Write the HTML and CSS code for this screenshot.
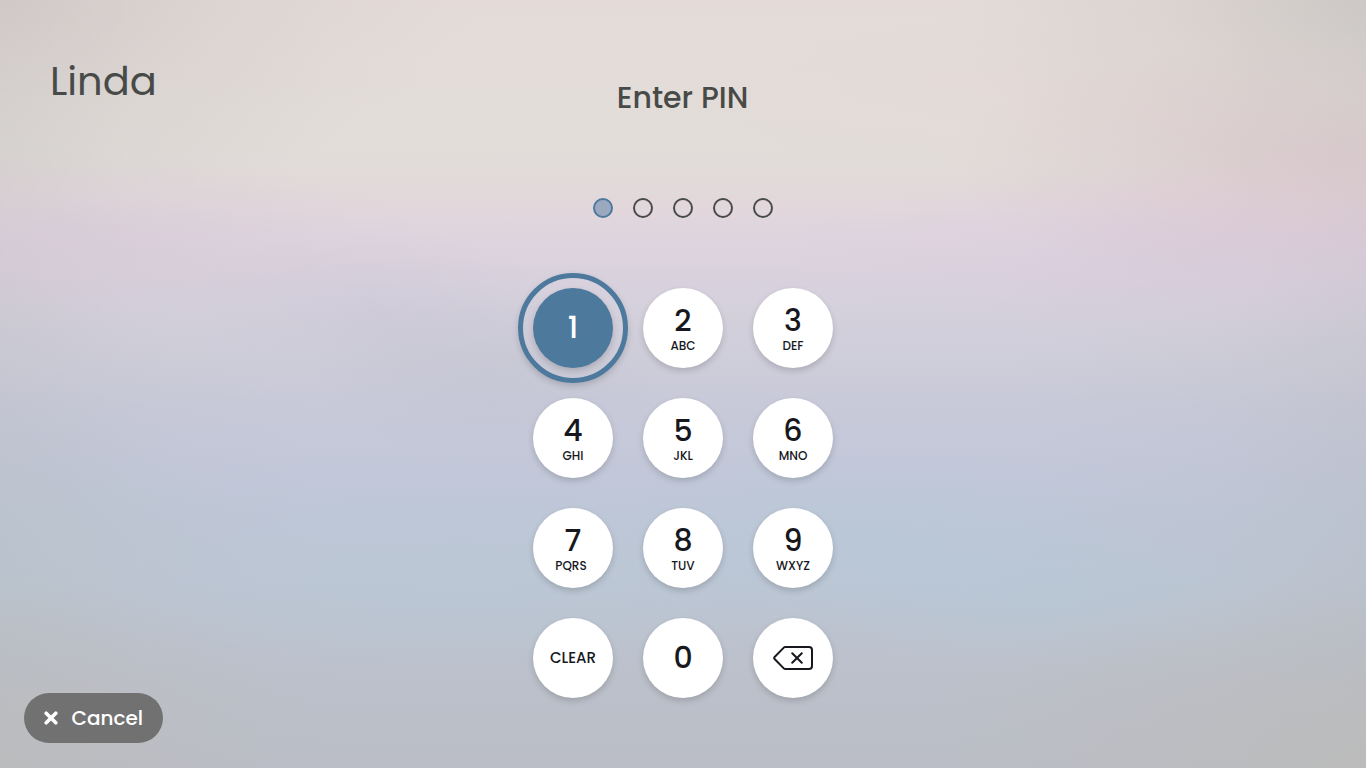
FILE: index.html
```html
<!DOCTYPE html>
<html lang="en">
<head>
    <meta charset="UTF-8">
    <title>Enter PIN</title>
    <link rel="stylesheet" href="styles.css">
</head>
<body>

<div class="screen">
    <header class="header">
        <div class="user-name">Linda</div>
        <h1 class="title">Enter PIN</h1>
    </header>

    <div class="pin-dots">
        <span class="dot filled"></span>
        <span class="dot"></span>
        <span class="dot"></span>
        <span class="dot"></span>
        <span class="dot"></span>
    </div>

    <div class="keypad">
        <button class="key active"><span class="digit">1</span></button>
        <button class="key"><span class="digit">2</span><span class="letters">ABC</span></button>
        <button class="key"><span class="digit">3</span><span class="letters">DEF</span></button>
        <button class="key"><span class="digit">4</span><span class="letters">GHI</span></button>
        <button class="key"><span class="digit">5</span><span class="letters">JKL</span></button>
        <button class="key"><span class="digit">6</span><span class="letters">MNO</span></button>
        <button class="key"><span class="digit">7</span><span class="letters wide">PQRS</span></button>
        <button class="key"><span class="digit">8</span><span class="letters">TUV</span></button>
        <button class="key"><span class="digit">9</span><span class="letters">WXYZ</span></button>
        <button class="key"><span class="clear">CLEAR</span></button>
        <button class="key"><span class="digit">0</span></button>
        <button class="key" aria-label="Delete">
            <svg class="backspace" viewBox="0 0 40 24" width="40" height="24">
                <path d="M12.2 1H36a3 3 0 0 1 3 3v16a3 3 0 0 1-3 3H12.2a2 2 0 0 1-1.4-.6L1.6 13a1.4 1.4 0 0 1 0-2l9.2-9.4a2 2 0 0 1 1.4-.6z"/>
                <path d="M19.2 7.2l9.6 9.6M28.8 7.2l-9.6 9.6"/>
            </svg>
        </button>
    </div>

    <footer class="footer">
        <button class="cancel">
            <svg class="close" viewBox="0 0 14 14" width="14" height="14">
                <path d="M2.2 2.2l9.6 9.6M11.8 2.2l-9.6 9.6"/>
            </svg>
            <span>Cancel</span>
        </button>
    </footer>
</div>

</body>
</html>
```
FILE: styles.css
```css
* {
    box-sizing: border-box;
}

body {
    margin: 0;
    font-family: Poppins, Inter, sans-serif;
    color: #484a48;
}

button {
    border: none;
    padding: 0;
    font: inherit;
    cursor: pointer;
}

.screen {
    height: 768px;
    display: flex;
    flex-direction: column;
    align-items: center;
    overflow: hidden;
    background:
        radial-gradient(ellipse 480px 200px at 0 0, rgba(180, 172, 172, 0.26), rgba(180, 172, 172, 0.1) 50%, rgba(180, 172, 172, 0)),
        radial-gradient(ellipse 420px 200px at 100% 0, rgba(174, 176, 170, 0.28), rgba(174, 174, 170, 0.1) 50%, rgba(174, 174, 170, 0)),
        radial-gradient(ellipse 460px 200px at 100% 100%, rgba(190, 188, 182, 0.55), rgba(190, 188, 182, 0)),
        radial-gradient(ellipse 300px 200px at 0 100%, rgba(190, 188, 184, 0.5), rgba(190, 188, 184, 0)),
        radial-gradient(ellipse 380px 120px at 1320px 160px, rgba(220, 190, 200, 0.45), rgba(220, 190, 200, 0)),
        radial-gradient(ellipse 460px 90px at 1240px 255px, rgba(218, 200, 220, 0.4), rgba(218, 200, 220, 0)),
        radial-gradient(ellipse 360px 90px at 60px 240px, rgba(214, 198, 214, 0.35), rgba(214, 198, 214, 0)),
        radial-gradient(ellipse 190px 80px at 370px 310px, rgba(198, 194, 210, 0.35), rgba(198, 194, 210, 0)),
        radial-gradient(ellipse 190px 90px at 490px 375px, rgba(190, 192, 206, 0.4), rgba(190, 192, 206, 0)),
        radial-gradient(ellipse 280px 90px at 860px 540px, rgba(182, 200, 216, 0.5), rgba(182, 200, 216, 0)),
        radial-gradient(ellipse 260px 80px at 1050px 595px, rgba(182, 200, 214, 0.5), rgba(182, 200, 214, 0)),
        radial-gradient(ellipse 340px 110px at 460px 585px, rgba(184, 200, 214, 0.45), rgba(184, 200, 214, 0)),
        radial-gradient(ellipse 240px 160px at 0 540px, rgba(182, 196, 198, 0.25), rgba(182, 196, 198, 0)),
        radial-gradient(ellipse 460px 80px at 1060px 90px, rgba(228, 216, 214, 0.6), rgba(228, 216, 214, 0)),
        linear-gradient(90deg, rgba(176, 178, 180, 0.2), rgba(176, 178, 180, 0.07) 10%, rgba(176, 178, 180, 0) 24%, rgba(176, 178, 180, 0) 74%, rgba(176, 178, 180, 0.08) 89%, rgba(176, 178, 180, 0.22)),
        linear-gradient(#e4dbd8 0, #e3dcd9 60px, #e2ddd9 110px, #e1dcd9 165px, #e2d8db 200px, #ddd3de 245px, #d6d1dd 295px, #cfceda 350px, #c8c9d9 410px, #c3c8d9 460px, #bfc7d7 510px, #bdc6d4 585px, #bcc3cf 630px, #bcc0ca 680px, #bbbec7 768px);
}

.header {
    width: 100%;
    height: 198px;
    display: grid;
    grid-template-columns: 1fr auto 1fr;
    align-items: start;
}

.user-name {
    padding: 56px 0 0 50px;
    font-size: 40px;
    line-height: 50px;
}

.title {
    margin: 0;
    padding: 78px 1px 0 0;
    font-size: 30px;
    font-weight: 500;
    line-height: 40px;
}

.pin-dots {
    display: flex;
    gap: 20px;
}

.dot {
    width: 20px;
    height: 20px;
    border: 2px solid #484a48;
    border-radius: 50%;
}

.dot.filled {
    border-color: #4d799f;
    background: #9aa9bf;
}

.keypad {
    margin-top: 70px;
    display: grid;
    grid-template-columns: repeat(3, 80px);
    grid-auto-rows: 80px;
    gap: 30px;
}

.key {
    display: flex;
    flex-direction: column;
    align-items: center;
    justify-content: center;
    border-radius: 50%;
    background: #fff;
    color: #17181d;
    box-shadow: 0 3px 6px rgba(0, 0, 0, 0.16);
}

.key.active {
    position: relative;
    background: #4d799d;
    color: #fff;
}

/* focus ring */
.key.active::after {
    content: "";
    position: absolute;
    inset: -15px;
    border: 5px solid #4d799d;
    border-radius: 50%;
    box-shadow: 0 3px 6px rgba(0, 0, 0, 0.16);
}

.digit {
    font-size: 30px;
    font-weight: 500;
    line-height: 32px;
}

.letters {
    margin-top: 1px;
    margin-bottom: -3px;
    font-size: 12px;
    font-weight: 500;
    line-height: 16px;
}

.letters.wide {
    margin-right: 4px;
}

.clear {
    margin-bottom: 2px;
    font-size: 15px;
    font-weight: 500;
}

.backspace {
    fill: none;
    stroke: #17181d;
    stroke-width: 2;
    stroke-linecap: round;
}

.footer {
    width: 100%;
    margin-top: -5px;
    padding-left: 24px;
}

.cancel {
    width: 139px;
    height: 50px;
    display: flex;
    align-items: center;
    gap: 13.5px;
    padding-left: 20px;
    border-radius: 25px;
    background: #717171;
    color: #fff;
    font-size: 20px;
    font-weight: 500;
}

.close {
    fill: none;
    stroke: #fff;
    stroke-width: 3.6;
    stroke-linecap: round;
}
```
